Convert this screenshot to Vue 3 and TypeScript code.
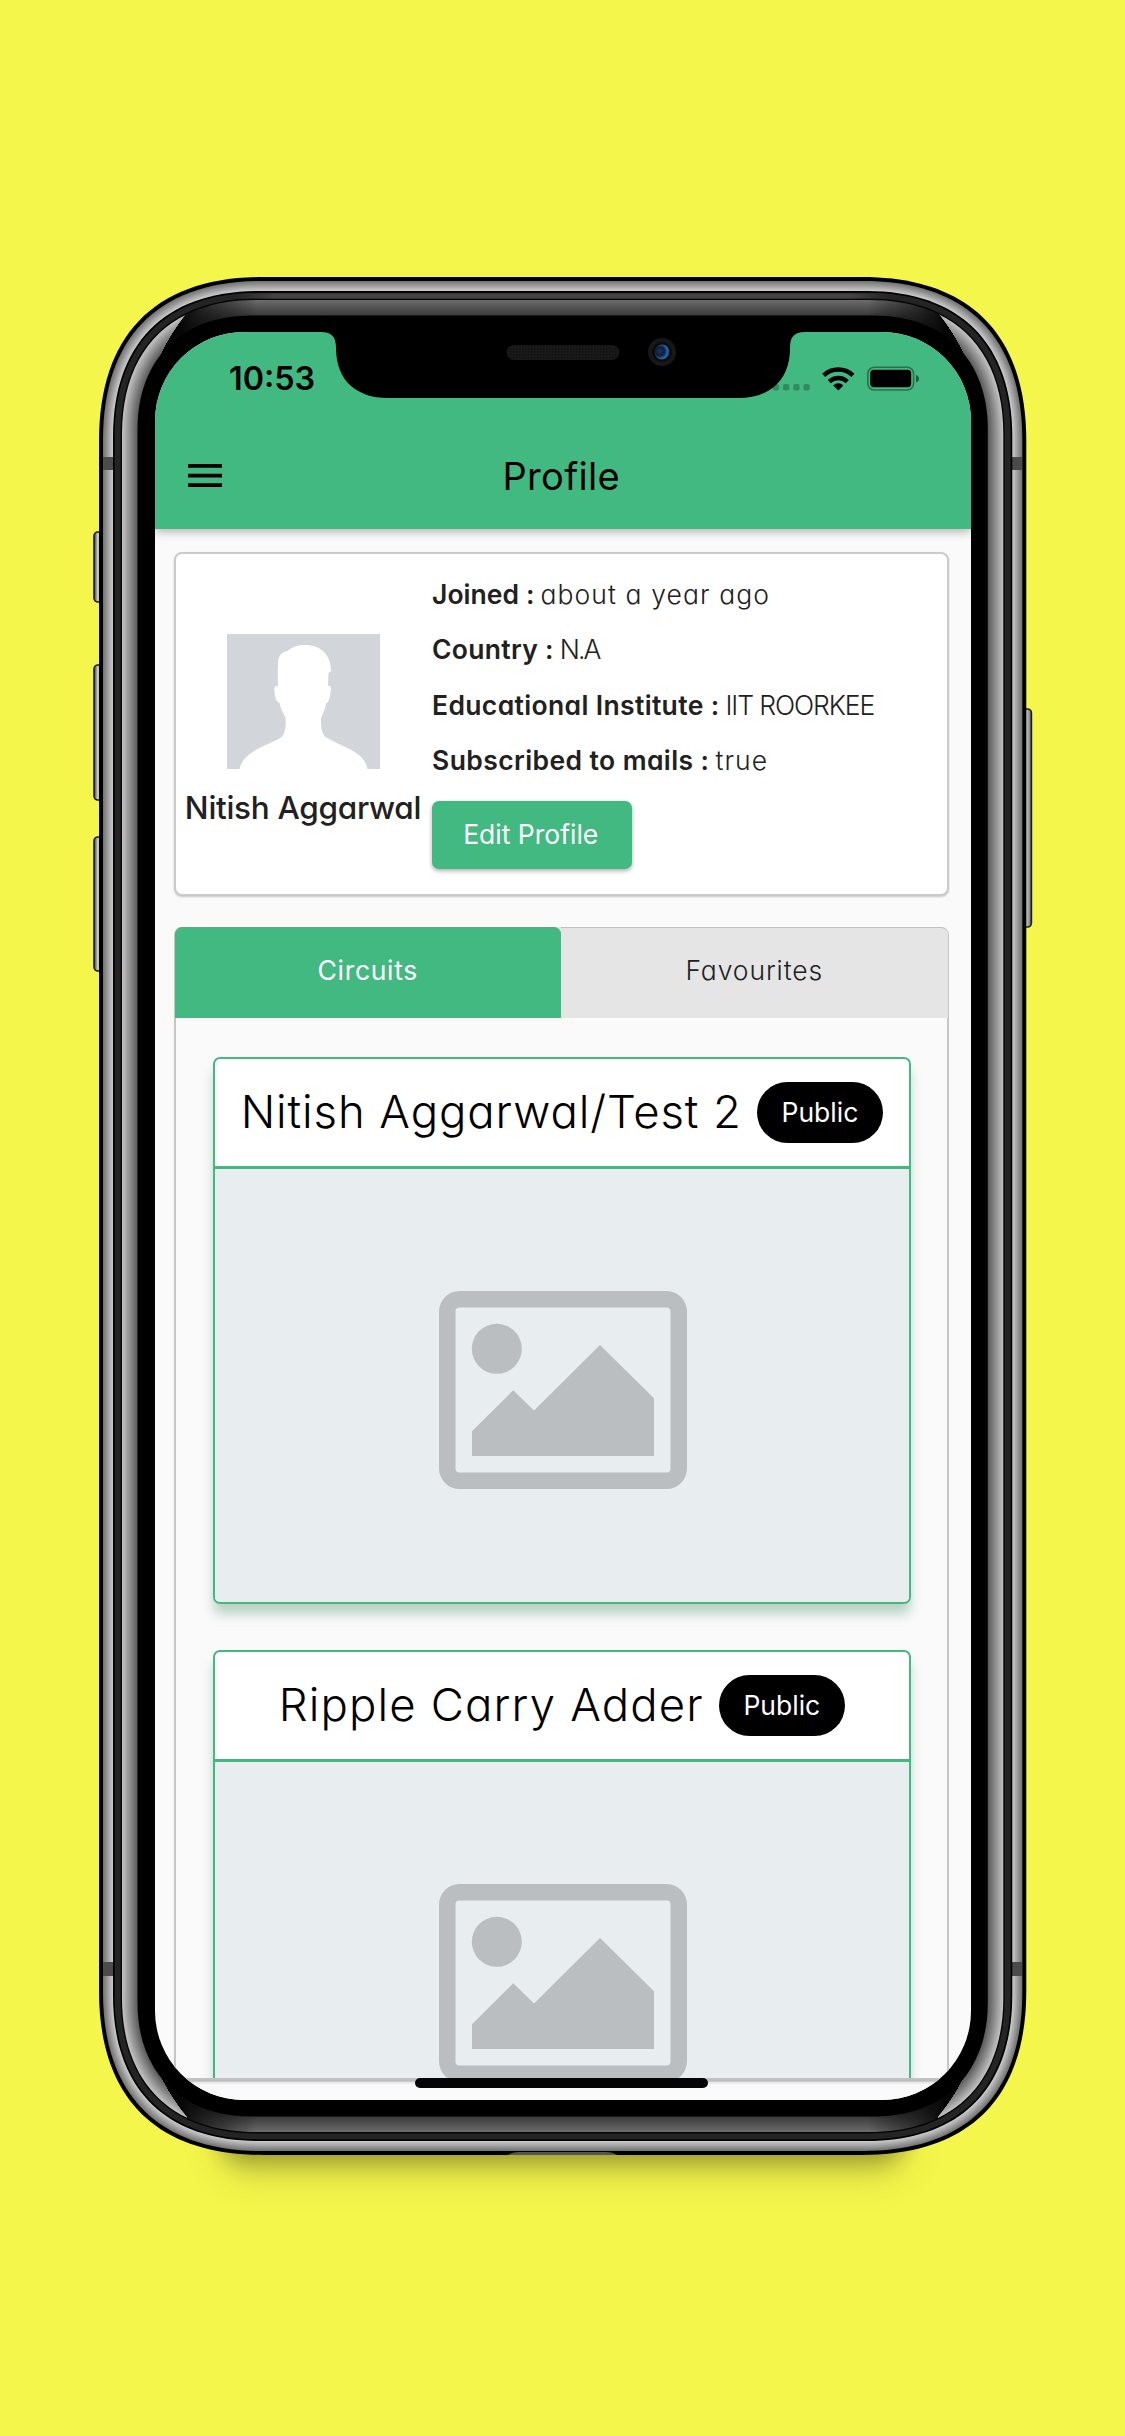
<script setup lang="ts">
interface Detail {
  label: string
  value: string
  labelSpacing: number
  valueSpacing: number
}

interface Circuit {
  title: string
  spacing: number
}

interface Ring {
  d: string
  fill: string
}

const details: Detail[] = [
  { label: 'Joined :', value: 'about a year ago', labelSpacing: 0.05, valueSpacing: 1.1 },
  { label: 'Country :', value: 'N.A', labelSpacing: 0.3, valueSpacing: -2 },
  { label: 'Educational Institute :', value: 'IIT ROORKEE', labelSpacing: 0.35, valueSpacing: -1.1 },
  { label: 'Subscribed to mails :', value: 'true', labelSpacing: 0.4, valueSpacing: 1.1 },
]

const circuits: Circuit[] = [
  { title: 'Nitish Aggarwal/Test 2', spacing: 0.9 },
  { title: 'Ripple Carry Adder', spacing: 1.15 },
]

// Outline of the phone body, moved inwards by `inset` pixels, with smooth corners.
function outline(inset: number): string {
  const l = 99 + inset
  const t = 277 + inset
  const r = 1026.3 - inset
  const b = 2155 - inset
  const s = 164 - inset * 1.3
  const c = 57 - inset * 0.34
  return (
    `M${l},${t + s} C${l},${t + c} ${l + c},${t} ${l + s},${t} L${r - s},${t} ` +
    `C${r - c},${t} ${r},${t + c} ${r},${t + s} L${r},${b - s} ` +
    `C${r},${b - c} ${r - c},${b} ${r - s},${b} L${l + s},${b} ` +
    `C${l + c},${b} ${l},${b - c} ${l},${b - s} Z`
  )
}

function grey(v: number): string {
  const n = Math.round(v)
  return `rgb(${n},${n},${n})`
}

function rings(from: number, to: number, start: number, end: number): Ring[] {
  const out: Ring[] = []
  for (let i = from; i < to; i += 1) {
    out.push({ d: outline(i), fill: grey(start + ((end - start) * (i - from)) / (to - from)) })
  }
  return out
}

const steel = rings(4, 14, 118, 208)
const sideGloss = rings(23, 39, 192, 84)
const edgeGloss = rings(23, 38, 106, 58)
</script>

<template>
  <main class="stage">
    <div class="ground-shadow"></div>
    <svg class="body" viewBox="0 0 1125 2436" aria-hidden="true">
      <defs>
        <linearGradient id="key" x1="0" x2="1" y1="0" y2="0">
          <stop offset="0" stop-color="#333" />
          <stop offset=".25" stop-color="#c4c4c4" />
          <stop offset=".7" stop-color="#b8b8b8" />
          <stop offset="1" stop-color="#666" />
        </linearGradient>
        <linearGradient id="fade" x1="180" x2="945" y1="0" y2="0" gradientUnits="userSpaceOnUse">
          <stop offset="0" stop-color="#000" />
          <stop offset=".1" stop-color="#fff" />
          <stop offset=".9" stop-color="#fff" />
          <stop offset="1" stop-color="#000" />
        </linearGradient>
        <linearGradient id="strip" x1="0" x2="1" y1="0" y2="0">
          <stop offset="0" stop-color="#444" stop-opacity="0" />
          <stop offset=".06" stop-color="#444" />
          <stop offset=".94" stop-color="#444" />
          <stop offset="1" stop-color="#444" stop-opacity="0" />
        </linearGradient>
        <mask id="edges" maskUnits="userSpaceOnUse" x="0" y="0" width="1125" height="2436">
          <rect x="180" y="290" width="765" height="1860" fill="url(#fade)" />
        </mask>
        <clipPath id="sides">
          <path d="M100,300 H187 V313 C167,336 141,380 139,450 V1982 C141,2052 167,2094 187,2117 V2140 H100 Z" />
          <path d="M1025,300 H938 V313 C958,336 984,380 987,450 V1982 C984,2052 958,2094 938,2117 V2140 H1025 Z" />
        </clipPath>
      </defs>

      <g fill="url(#key)" stroke="#1b1b1b" stroke-width="1.6">
        <rect x="94" y="532" width="14" height="70" rx="4" />
        <rect x="94" y="665" width="14" height="135" rx="4" />
        <rect x="94" y="837" width="14" height="134" rx="4" />
        <rect x="1018" y="709" width="13.4" height="218" rx="4" />
      </g>

      <path :d="outline(0)" fill="#000" />
      <path v-for="(ring, i) in steel" :key="'a' + i" :d="ring.d" :fill="ring.fill" />
      <g fill="#4c4a4b">
        <rect x="103" y="457" width="11" height="13" />
        <rect x="1011" y="457" width="11" height="13" />
        <rect x="103" y="1962" width="11" height="14" />
        <rect x="1011" y="1962" width="11" height="14" />
      </g>
      <path :d="outline(14)" fill="#000" />
      <path :d="outline(15.7)" fill="#242424" />
      <path :d="outline(21.6)" fill="#060606" />
      <g mask="url(#edges)">
        <path v-for="(ring, i) in edgeGloss" :key="'b' + i" :d="ring.d" :fill="ring.fill" />
      </g>
      <g clip-path="url(#sides)">
        <path v-for="(ring, i) in sideGloss" :key="'c' + i" :d="ring.d" :fill="ring.fill" />
      </g>
      <path :d="outline(38.5)" fill="#000" />
      <path d="M235,293.500 H890 V298.500 H235 Z" fill="url(#strip)" />
      <path d="M508,2155 Q512,2152 519,2152 H606 Q613,2152 617,2155 Z" fill="#555" />
    </svg>

    <section class="screen">
      <header class="app-bar">
        <div class="status">
          <span class="clock">10:53</span>
          <svg class="indicators" width="150" height="30" viewBox="770 364 150 30">
            <g fill="#000" fill-opacity=".25">
              <rect x="772.8" y="384" width="6.4" height="6.4" rx="2" />
              <rect x="783" y="384" width="6.4" height="6.4" rx="2" />
              <rect x="793.2" y="384" width="6.4" height="6.4" rx="2" />
              <rect x="803.4" y="384" width="6.4" height="6.4" rx="2" />
            </g>
            <path d="M838.3 390.6 L833.2 385.4 A7.3 7.3 0 0 1 843.4 385.4 Z" />
            <g fill="none" stroke="#000" stroke-width="4.4">
              <path d="M829.3 381.6 A13 13 0 0 1 847.3 381.6" />
              <path d="M823.7 375.4 A21.2 21.2 0 0 1 852.9 375.4" />
            </g>
            <rect x="867.8" y="367.2" width="45.8" height="22.8" rx="6.5" fill="none" stroke="#000" stroke-opacity=".4" stroke-width="1.6" />
            <rect x="870.2" y="369.8" width="41" height="17.4" rx="3.6" />
            <path d="M916 375 Q919 376 919 378.8 Q919 381.5 916 382.4 Z" fill-opacity=".5" />
          </svg>
        </div>
        <div class="toolbar">
          <svg class="menu" width="34" height="23" viewBox="0 0 34 23"><path d="M0 0H34V3.8H0ZM0 9.8H34V13.5H0ZM0 19.2H34V23H0Z" /></svg>
          <h1>Profile</h1>
        </div>
      </header>

      <div class="content">
        <article class="profile">
          <div class="identity">
            <svg class="avatar" viewBox="0 0 153 134" width="153" height="135" preserveAspectRatio="none">
              <rect width="153" height="134" fill="#d2d6da" />
              <path
                fill="#fff"
                d="M12.500 134 C15 123 24 117 37 111 C45 107.500 51 105 55 102 C59 97 59 90 58.500 83 C56 78 53.500 74 52.500 68.500 C48.500 67 47.500 60 47.300 54 C48 51.500 50 51.500 51 52 C51 45 50.500 37 51 29 C51.500 21 55 17.500 60 17 C66 12.500 71 11 78 11 C94 11 104 21 104 37 L101.500 38.500 L101 51.500 C103 51 104 52.500 103.800 55 C103 62 102 68 99 69 C98 75 96 79 94 83.500 C94 91 94 97 98 102 C103 105 110 108.500 117 111.500 C130 117.500 138 123 140.500 134 Z"
              />
            </svg>
            <h2>Nitish Aggarwal</h2>
          </div>
          <div class="facts">
            <p v-for="d in details" :key="d.label">
              <b :style="{ letterSpacing: d.labelSpacing + 'px' }">{{ d.label }}</b>
              <span :style="{ letterSpacing: d.valueSpacing + 'px' }">{{ d.value }}</span>
            </p>
            <button type="button"><span>Edit Profile</span></button>
          </div>
        </article>

        <article class="tabs">
          <nav>
            <a class="active"><span>Circuits</span></a>
            <a><span>Favourites</span></a>
          </nav>
          <div class="list">
            <section v-for="c in circuits" :key="c.title" class="circuit">
              <header>
                <h3 :style="{ letterSpacing: c.spacing + 'px' }">{{ c.title }}</h3>
                <em><span>Public</span></em>
              </header>
              <div class="preview">
                <svg width="248" height="198" viewBox="0 0 248 198" fill="#babec1">
                  <path
                    fill-rule="evenodd"
                    d="M20.500 0H227.500A20.500 20.500 0 0 1 248 20.500V177.500A20.500 20.500 0 0 1 227.500 198H20.500A20.500 20.500 0 0 1 0 177.500V20.500A20.500 20.500 0 0 1 20.500 0ZM20.500 16.500A4 4 0 0 0 16.500 20.500V177.500A4 4 0 0 0 20.500 181.500H227.500A4 4 0 0 0 231.500 177.500V20.500A4 4 0 0 0 227.500 16.500Z"
                  />
                  <circle cx="57.800" cy="57.800" r="25" />
                  <path d="M33 140.200L74.200 99.200L95 119.500L161 54L215 107.200V165H33Z" />
                </svg>
              </div>
            </section>
          </div>
        </article>
      </div>
      <div class="home-area"><i></i></div>
    </section>

    <svg class="notch" viewBox="318 328 490 72" width="490" height="72" aria-hidden="true">
      <defs>
        <pattern id="mesh" width="3" height="3" patternUnits="userSpaceOnUse">
          <rect width="3" height="3" fill="#191919" />
          <rect width="1.500" height="1.500" fill="#101010" />
        </pattern>
        <radialGradient id="lens" cx=".35" cy=".45" r=".65">
          <stop offset="0" stop-color="#1a3764" />
          <stop offset=".45" stop-color="#0c1d3c" />
          <stop offset=".8" stop-color="#2a68aa" />
          <stop offset="1" stop-color="#12294d" />
        </radialGradient>
      </defs>
      <path d="M318,328 V332 H321 C332,332 336,337 336,348 C336,380 356,398 388,398 H738 C770,398 790,380 790,348 C790,337 794,332 805,332 H808 V328 Z" />
      <rect x="506.500" y="345" width="113" height="15" rx="7.500" fill="url(#mesh)" />
      <circle cx="662" cy="352" r="14" fill="#171717" />
      <circle cx="662" cy="352" r="10" fill="#0b0b0b" />
      <circle cx="662.200" cy="352" r="7.500" fill="url(#lens)" />
    </svg>
  </main>
</template>

<style>
body {
  margin: 0;
  background: #f5f64b;
}
</style>

<style scoped>
.stage {
  position: relative;
  box-sizing: border-box;
  width: 1125px;
  height: 2436px;
  padding: 332px 0 0 155px;
  overflow: hidden;
  background: #f5f64b;
  font-family: Inter, "Open Sans", sans-serif;
  font-feature-settings: "cv11";
  color: #212121;
}
.ground-shadow {
  position: absolute;
  left: 220px;
  top: 2110px;
  width: 685px;
  height: 52px;
  border-radius: 30px;
  background: rgba(60, 60, 20, 0.5);
  box-shadow: 0 12px 30px rgba(60, 60, 20, 0.2);
  filter: blur(11px);
}
.body {
  position: absolute;
  left: 0;
  top: 0;
  width: 1125px;
  height: 2436px;
}
.notch {
  position: absolute;
  left: 318px;
  top: 328px;
}
.screen {
  position: relative;
  isolation: isolate;
  display: flex;
  flex-direction: column;
  width: 815.5px;
  height: 1767.7px;
  overflow: hidden;
  border-radius: 89px;
  background: #fafafa;
}
h1, h2, h3, p { margin: 0; font-weight: 400; white-space: nowrap; }

.app-bar {
  flex: none;
  height: 197px;
  background: #43b982;
  color: #000;
  box-shadow: 0 2px 10px rgba(0, 0, 0, 0.32);
  z-index: 1;
}
.status {
  display: flex;
  align-items: center;
  justify-content: space-between;
  height: 93px;
  padding: 0 51px 0 74px;
}
.clock { font-size: 32.3px; font-weight: 600; }
.toolbar {
  display: grid;
  grid-template-columns: 1fr auto 1fr;
  align-items: center;
  height: 101px;
  padding: 0 34px 0 33px;
}
.toolbar h1 { font-size: 38px; font-weight: 380; line-height: 44px; letter-spacing: 0.3px; margin-left: -2px; }
.menu { margin-top: -1px; }

.content {
  flex: none;
  display: flex;
  flex-direction: column;
  gap: 31px;
  height: 1548.500px;
  padding: 23px 22px 0 19px;
  box-sizing: border-box;
  overflow: hidden;
}
.profile {
  display: flex;
  box-sizing: border-box;
  height: 343.500px;
  flex: none;
  border: 2px solid #cbcbcb;
  border-bottom-width: 2.500px;
  border-radius: 8px;
  background: #fff;
  box-shadow: 0 1px 2px rgba(0, 0, 0, 0.2);
}
.identity {
  display: flex;
  flex-direction: column;
  align-items: center;
  width: 254px;
  padding-top: 80px;
}
.avatar { display: block; }
.identity h2 { font-size: 31.500px; font-weight: 540; line-height: 40px; margin-top: 18.500px; letter-spacing: -0.3px; }
.facts { padding: 13px 0 0 2px; }
.facts p { display: flex; gap: 6px; height: 55.400px; line-height: 55.400px; font-size: 26.500px; font-weight: 330; }
.facts b { font-weight: 570; }
.facts button {
  display: block;
  width: 199.500px;
  height: 68.500px;
  margin-top: 12px;
  border: 0;
  border-radius: 7px;
  padding: 0 2px 2px 0;
  background: #43b982;
  color: #fff;
  font: inherit;
  font-size: 26.500px;
  box-shadow: 0 2px 4px rgba(0, 0, 0, 0.32);
}

.tabs {
  flex: none;
  box-sizing: border-box;
  height: 1200px;
  border: 2px solid #c6c6c6;
  border-radius: 8px 8px 0 0;
}
.tabs nav { display: flex; height: 91px; margin: -1.500px -1px 0 -1.500px; background: #e5e5e5; border-radius: 7px 7px 0 0; }
.tabs a {
  flex: 1;
  display: flex;
  align-items: center;
  justify-content: center;
  padding-bottom: 7px;
  box-sizing: border-box;
  background: #e5e5e5;
  border-top: 1.500px solid #c0c0c0;
  border-radius: 0 7px 0 0;
  font-size: 26.500px;
  font-weight: 330;
  letter-spacing: 0.9px;
}
.tabs a.active { background: #43b982; color: #fff; font-weight: 400; letter-spacing: 0.7px; border-color: #5fa883; border-radius: 7px 7px 0 0; }
.list { display: flex; flex-direction: column; gap: 46px; padding: 39px 36px 0 37px; }
.circuit {
  box-sizing: border-box;
  height: 547px;
  flex: none;
  display: flex;
  flex-direction: column;
  overflow: hidden;
  border: 2px solid #43b982;
  border-radius: 7px;
  background: #fff;
  box-shadow: 0 11px 12px -1px rgba(46, 125, 82, 0.32);
}
.circuit header {
  display: flex;
  flex: none;
  align-items: center;
  justify-content: center;
  gap: 15px;
  height: 107px;
  border-bottom: 3.500px solid #43b982;
}
.circuit h3 { color: #000; font-size: 45.500px; font-weight: 360; line-height: 60px; padding-bottom: 2px; }
.circuit em {
  display: flex;
  align-items: center;
  justify-content: center;
  width: 126px;
  height: 61px;
  padding-bottom: 1px;
  box-sizing: border-box;
  border-radius: 31px;
  background: #000;
  color: #fff;
  font-size: 26.500px;
  font-style: normal;
}
.preview {
  flex: 1;
  display: flex;
  align-items: center;
  justify-content: center;
  padding: 8px 0 0 2px;
  background: #e8edf0;
}
.home-area {
  flex: 1;
  background: linear-gradient(#c4c4c4, #bdbdbd 3px, #e8e8e8 4.500px, #fafafa 7px);
}
.home-area i { display: block; width: 293px; height: 10px; margin-left: 260px; border-radius: 5px; background: #050505; }
</style>
